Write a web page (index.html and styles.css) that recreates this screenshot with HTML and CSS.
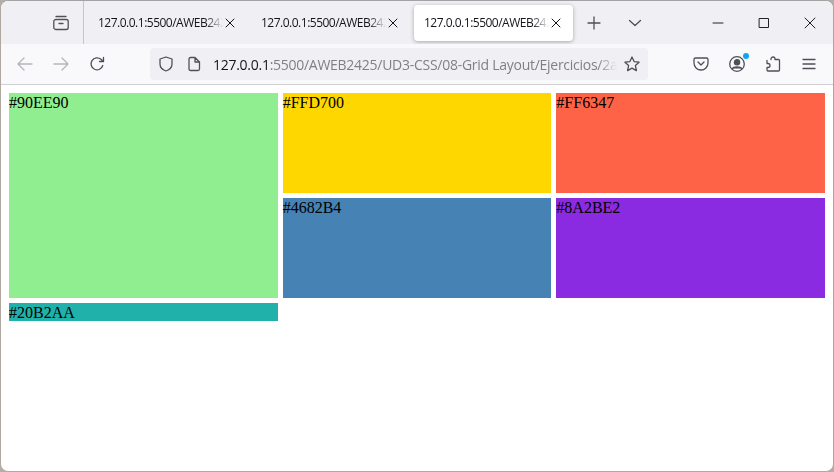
FILE: index.html
```html
<!DOCTYPE html>
<html lang="en">
<head>
    <meta charset="UTF-8">
    <title>127.0.0.1:5500/AWEB2425</title>
    <link rel="stylesheet" href="styles.css">
</head>
<body>

    <div class="window">
        <div class="tabbar">
            <div class="view-btn">
                <svg width="16" height="16" viewBox="0 0 16 16" class="icon">
                    <path d="M3 1.500h10M.8 6.500a2 2 0 0 1 2-2h10.400a2 2 0 0 1 2 2v6a2 2 0 0 1-2 2H2.800a2 2 0 0 1-2-2zM6 8.500h4"/>
                </svg>
            </div>
            <div class="tab">
                <span class="tab-title">127.0.0.1:5500/AWEB242</span>
                <svg width="10" height="10" viewBox="0 0 10 10" class="icon icon-close"><path d="M1 1l8 8M9 1 1 9"/></svg>
            </div>
            <div class="tab">
                <span class="tab-title">127.0.0.1:5500/AWEB242</span>
                <svg width="10" height="10" viewBox="0 0 10 10" class="icon icon-close"><path d="M1 1l8 8M9 1 1 9"/></svg>
            </div>
            <div class="tab tab-active">
                <span class="tab-title">127.0.0.1:5500/AWEB242</span>
                <svg width="10" height="10" viewBox="0 0 10 10" class="icon icon-close"><path d="M1 1l8 8M9 1 1 9"/></svg>
            </div>
            <div class="new-tab">
                <svg width="14" height="14" viewBox="0 0 14 14" class="icon"><path d="M7 1v12M1 7h12"/></svg>
            </div>
            <div class="tab-list">
                <svg width="14" height="14" viewBox="0 0 14 14" class="icon"><path d="M1.500 4.500 7 9.500l5.500-5"/></svg>
            </div>
            <div class="win-controls">
                <div class="win-btn"><svg width="12" height="12" viewBox="0 0 12 12" class="icon icon-dark"><path d="M1 6h10"/></svg></div>
                <div class="win-btn"><svg width="12" height="12" viewBox="0 0 12 12" class="icon icon-dark"><path d="M1.500 1.500h9v9h-9z"/></svg></div>
                <div class="win-btn"><svg width="12" height="12" viewBox="0 0 12 12" class="icon icon-dark"><path d="M1 1l10 10M11 1 1 11"/></svg></div>
            </div>
        </div>

        <div class="navbar">
            <div class="nav-btn">
                <svg width="16" height="16" viewBox="0 0 16 16" class="icon icon-off"><path d="M1 8h14M7 2 1 8l6 6"/></svg>
            </div>
            <div class="nav-btn">
                <svg width="16" height="16" viewBox="0 0 16 16" class="icon icon-off"><path d="M1 8h14M9 2l6 6-6 6"/></svg>
            </div>
            <div class="nav-btn">
                <svg width="16" height="16" viewBox="0 0 16 16" class="icon"><path d="M13.800 9.500A6 6 0 1 1 12 3.300L14.500 5.500M14.500 1.500v4h-4"/></svg>
            </div>
            <div class="urlbar">
                <svg width="16" height="16" viewBox="0 0 16 16" class="icon"><path d="M8 1 2 3v5c0 3.500 3 6 6 7 3-1 6-3.500 6-7V3z"/></svg>
                <svg width="16" height="16" viewBox="0 0 16 16" class="icon url-doc"><path d="M3 3a1.500 1.500 0 0 1 1.500-1.500H9L13.500 6v7a1.500 1.500 0 0 1-1.500 1.500H4.500A1.500 1.500 0 0 1 3 13zM9 1.500V6h4.500"/></svg>
                <span class="url-text"><span class="url-host">127.0.0.1</span>:5500/AWEB2425/UD3-CSS/08-Grid Layout/Ejercicios/2a</span>
                <svg width="16" height="16" viewBox="0 0 16 16" class="icon"><path d="M8 1l2.100 4.600 5 .6-3.700 3.400 1 5L8 12.100 3.600 14.600l1-5L.9 6.200l5-.6z"/></svg>
            </div>
            <div class="nav-right">
                <div class="nav-btn">
                    <svg width="16" height="16" viewBox="0 0 16 16" class="icon"><path d="M2.500 2h11A1.500 1.500 0 0 1 15 3.500V7A7 7 0 0 1 1 7V3.500A1.500 1.500 0 0 1 2.500 2zM5 6l3 3 3-3"/></svg>
                </div>
                <div class="nav-btn">
                    <svg width="18" height="18" viewBox="0 0 18 18" class="icon"><circle cx="9" cy="9" r="7.300"/><circle cx="9" cy="7.200" r="2.600" class="icon-fill"/><path d="M4.500 13.500c1-2 8-2 9 0" class="icon-fill"/></svg>
                    <span class="badge"></span>
                </div>
                <div class="nav-btn">
                    <svg width="16" height="16" viewBox="0 0 16 16" class="icon"><path d="M6 3.500V3a2 2 0 0 1 4 0v.500h3.500a1 1 0 0 1 1 1V14a1 1 0 0 1-1 1H3a1 1 0 0 1-1-1v-2.500h1a2 2 0 0 0 0-4H2V4.500"/></svg>
                </div>
                <div class="nav-btn">
                    <svg width="16" height="16" viewBox="0 0 16 16" class="icon"><path d="M2 3.500h12M2 8h12M2 12.500h12"/></svg>
                </div>
            </div>
        </div>

        <div class="page">
            <div class="grid">
                <div class="item item-tall green">#90EE90</div>
                <div class="item gold">#FFD700</div>
                <div class="item tomato">#FF6347</div>
                <div class="item steel">#4682B4</div>
                <div class="item violet">#8A2BE2</div>
                <div class="item teal">#20B2AA</div>
            </div>
        </div>
    </div>

</body>
</html>
```
FILE: styles.css
```css
html {
    background-color: #b5aea8;
}

body {
    margin: 0;
    height: 472px;
    overflow: hidden;
}

.window {
    box-sizing: border-box;
    height: 472px;
    display: flex;
    flex-direction: column;
    border: 1px solid #aaa6a4;
    border-color: #a3a3a5 #aaa6a4 #b0a8a0 #b0a8a0;
    border-radius: 8px;
    overflow: hidden;
    background: #fff;
}

.icon {
    fill: none;
    stroke: #4f4f58;
    stroke-width: 1.3;
    stroke-linejoin: round;
    stroke-linecap: round;
    flex-shrink: 0;
}

.icon-off {
    stroke: #b4b4ba;
}

.icon-dark {
    stroke: #222;
    stroke-width: 1;
}

.icon-close {
    stroke: #15141a;
    stroke-width: 1;
}

.icon-fill {
    fill: #4f4f58;
}

/* tab strip */
.tabbar {
    height: 43px;
    display: flex;
    align-items: center;
    background: #f0f0f4;
    font-family: "Open Sans", "Noto Sans", sans-serif;
    font-size: 12px;
    color: #15141a;
}

.view-btn {
    box-sizing: border-box;
    width: 83px;
    height: 43px;
    padding-right: 14px;
    margin-right: 2px;
    display: flex;
    align-items: center;
    justify-content: flex-end;
    border-right: 1px solid #c6c6c8;
}

.tab {
    box-sizing: border-box;
    width: 159px;
    height: 36px;
    margin: 0 2px;
    padding: 0 12px 0 10px;
    display: flex;
    align-items: center;
    border-radius: 4px;
}

.tab-active {
    background: #fff;
    box-shadow: 0 1px 4px rgba(0, 0, 0, 0.3);
}

.tab-title {
    flex: 1;
    white-space: nowrap;
    overflow: hidden;
    letter-spacing: -0.5px;
    -webkit-mask-image: linear-gradient(to right, #000 108px, transparent 125px);
    mask-image: linear-gradient(to right, #000 108px, transparent 125px);
}

.new-tab {
    width: 14px;
    margin-left: 12px;
    display: flex;
}

.tab-list {
    width: 14px;
    margin-left: 27px;
    display: flex;
}

.win-controls {
    margin-left: auto;
    display: flex;
}

.win-btn {
    width: 46px;
    height: 43px;
    display: flex;
    align-items: center;
    justify-content: center;
}

/* toolbar */
.navbar {
    height: 40px;
    flex-shrink: 0;
    display: flex;
    align-items: center;
    padding-left: 6px;
    background: #f9f9fb;
    border-bottom: 1px solid #cfcfd8;
}

.nav-btn {
    position: relative;
    width: 36px;
    height: 32px;
    display: flex;
    align-items: center;
    justify-content: center;
}

.urlbar {
    box-sizing: border-box;
    width: 498px;
    height: 32px;
    margin-left: 35px;
    padding: 0 8px;
    display: flex;
    align-items: center;
    background: #f0f0f4;
    border-radius: 4px;
    font-family: "Open Sans", "Noto Sans", sans-serif;
    font-size: 14px;
    color: #7f7f87;
}

.url-doc {
    margin-left: 12px;
}

.url-text {
    flex: 1;
    margin: 0 6px 0 11px;
    white-space: nowrap;
    overflow: hidden;
    letter-spacing: -0.27px;
    -webkit-mask-image: linear-gradient(to right, #000 385px, transparent 404px);
    mask-image: linear-gradient(to right, #000 385px, transparent 404px);
}

.url-host {
    color: #15141a;
}

.nav-right {
    display: flex;
    margin-left: 35px;
}

.badge {
    position: absolute;
    top: 5px;
    right: 6px;
    width: 6px;
    height: 6px;
    border-radius: 50%;
    background: #0ea5f0;
}

/* page content */
.page {
    flex: 1;
    padding: 8px;
    font-family: "Liberation Serif", "Times New Roman", serif;
    font-size: 16px;
    color: #000;
}

.grid {
    display: grid;
    grid-template-columns: repeat(3, 1fr);
    grid-template-rows: 100px 100px 18px;
    gap: 5px;
}

.item {
    box-sizing: border-box;
    padding-top: 1px;
    line-height: 18px;
}

.item-tall {
    grid-row: span 2;
}

.green { background-color: #90ee90; }
.gold { background-color: #ffd700; }
.tomato { background-color: #ff6347; }
.steel { background-color: #4682b4; }
.violet { background-color: #8a2be2; }
.teal { background-color: #20b2aa; }
```
